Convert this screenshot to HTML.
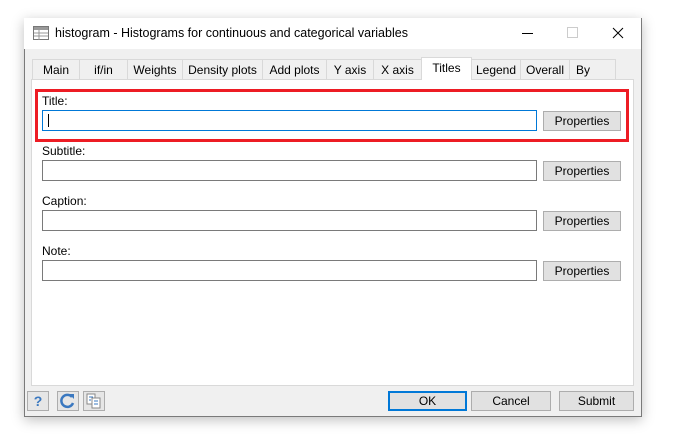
<!DOCTYPE html><html><head><style>
body{margin:0;width:682px;height:443px;background:#fff;font-family:"Liberation Sans",sans-serif;font-size:12px;color:#000;position:relative;overflow:hidden}
.a{position:absolute}
.win{left:24px;top:18px;width:616px;height:397px;border:1px solid #7a7a7a;background:#f0f0f0;box-shadow:0 3px 12px rgba(0,0,0,.25)}
.tb{left:24px;top:18px;width:617px;height:31px;background:#fff}
.tab{position:absolute;top:59px;height:20px;border:1px solid #d9d9d9;border-bottom:none;background:#f0f0f0;box-sizing:border-box;line-height:20px;text-align:center}
.inp{position:absolute;left:42px;width:495px;height:21px;border:1px solid #7a7a7a;background:#fff;box-sizing:border-box}
.btn{position:absolute;border:1px solid #adadad;background:#e1e1e1;box-sizing:border-box;text-align:center}
.pb{left:543px;width:78px;height:20px;line-height:18px}
.lbl{position:absolute;left:42px}
.ic{position:absolute;top:391px;width:22px;height:20px;border:1px solid #adadad;background:#e6e6e6;box-sizing:border-box}
</style></head><body>
<div class="a win"></div>
<div class="a tb"></div>
<svg class="a" style="left:33px;top:26px" width="16" height="14"><rect x=".5" y=".5" width="15" height="13" fill="#fff" stroke="#777"/><rect x="1" y="1" width="14" height="3" fill="#999"/><path d="M1 7h14M1 10h14M6 4v10" stroke="#999"/></svg>
<div class="a" style="left:55px;top:26px;font-size:12.5px">histogram - Histograms for continuous and categorical variables</div>
<div class="a" style="left:522px;top:33px;width:11px;height:1px;background:#000"></div>
<div class="a" style="left:567px;top:27px;width:9px;height:9px;border:1px solid #ccc"></div>
<svg class="a" style="left:612px;top:27px" width="12" height="12"><path d="M1 1l10 10M11 1L1 11" stroke="#000"/></svg>
<div class="a" style="left:31px;top:79px;width:601px;height:305px;background:#fff;border:1px solid #d9d9d9"></div>
<div class="tab" style="left:32px;width:48px">Main</div>
<div class="tab" style="left:79px;width:49px">if/in</div>
<div class="tab" style="left:127px;width:56px">Weights</div>
<div class="tab" style="left:182px;width:81px">Density plots</div>
<div class="tab" style="left:262px;width:65px">Add plots</div>
<div class="tab" style="left:326px;width:48px">Y axis</div>
<div class="tab" style="left:373px;width:49px">X axis</div>
<div class="tab" style="left:421px;top:57px;height:23px;width:51px;background:#fff;line-height:20px">Titles</div>
<div class="tab" style="left:471px;width:50px">Legend</div>
<div class="tab" style="left:520px;width:50px">Overall</div>
<div class="tab" style="left:569px;width:47px;text-align:left;padding-left:6px">By</div>
<div class="a" style="left:35px;top:89px;width:588px;height:47px;border:3px solid #ed1c24"></div>
<div class="lbl" style="top:94px">Title:</div>
<div class="inp" style="top:110px;border-color:#0078d7"></div>
<div class="a" style="left:48px;top:114px;width:1px;height:13px;background:#000"></div>
<div class="btn pb" style="top:111px">Properties</div>
<div class="lbl" style="top:144px">Subtitle:</div>
<div class="inp" style="top:160px"></div>
<div class="btn pb" style="top:161px">Properties</div>
<div class="lbl" style="top:194px">Caption:</div>
<div class="inp" style="top:210px"></div>
<div class="btn pb" style="top:211px">Properties</div>
<div class="lbl" style="top:244px">Note:</div>
<div class="inp" style="top:260px"></div>
<div class="btn pb" style="top:261px">Properties</div>
<div class="ic" style="left:27px;color:#3a78c0;font-weight:bold;text-align:center;line-height:18px;font-size:14px">?</div>
<div class="ic" style="left:57px"><svg width="20" height="18"><path d="M14 5a6 6 0 1 0 1 6" fill="none" stroke="#3a78c0" stroke-width="2.5"/><path d="M11 2l5 0 0 5z" fill="#3a78c0"/></svg></div>
<div class="ic" style="left:83px"><svg width="20" height="18"><rect x="3" y="2" width="8" height="10" fill="#fff" stroke="#888"/><rect x="8" y="6" width="8" height="10" fill="#fff" stroke="#888"/><path d="M5 5h4M5 8h2M10 9h4M10 12h4" stroke="#3a78c0"/></svg></div>
<div class="btn" style="left:388px;top:391px;width:79px;height:20px;border:2px solid #0078d7;line-height:16px">OK</div>
<div class="btn" style="left:471px;top:391px;width:80px;height:20px;line-height:18px">Cancel</div>
<div class="btn" style="left:559px;top:391px;width:75px;height:20px;line-height:18px">Submit</div>
</body></html>
